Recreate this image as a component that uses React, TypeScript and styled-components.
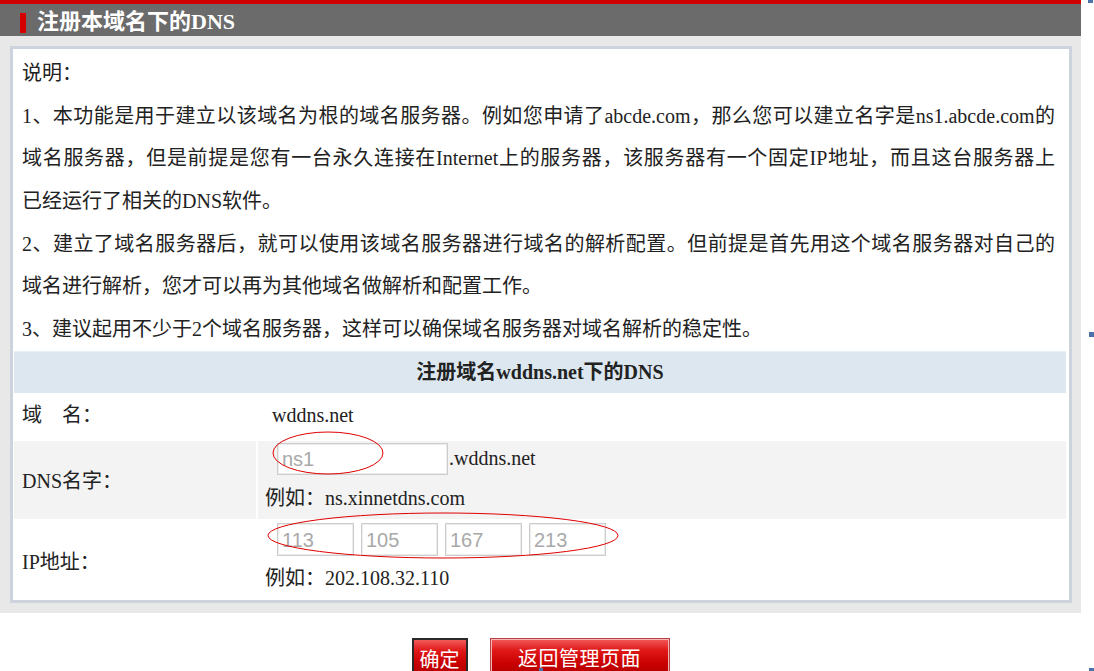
import styled, { createGlobalStyle } from "styled-components";

const GlobalStyle = createGlobalStyle`
  html, body {
    margin: 0;
    padding: 0;
    background: #fff;
  }
  body {
    font-family: "Liberation Serif", "Noto Sans CJK SC", serif;
    font-size: 20px;
    color: #222;
  }
`;

const Page = styled.div`
  position: relative;
  width: 1094px;
  height: 671px;
  overflow: hidden;
`;

const Frame = styled.div`
  width: 1081px;
`;

const Header = styled.div`
  height: 32px;
  border-top: 4px solid #d10000;
  background: #6b6b6b;
  display: flex;
  align-items: center;
  gap: 11px;
  padding-left: 20px;
`;

const HeaderMark = styled.span`
  width: 6px;
  height: 20px;
  margin-top: 6px;
  background: #d40000;
`;

const HeaderTitle = styled.h1`
  margin: 4px 0 0;
  font-size: 22px;
  line-height: 1;
  font-weight: bold;
  color: #fff;
`;

const Shell = styled.div`
  background: #e8e8e8;
  padding: 10px 9px 10px 10px;
`;

const Panel = styled.div`
  background: #fff;
  border: 3px solid #ccd3dc;
  padding: 3px 3px 0 1px;
`;

const Notes = styled.div`
  padding: 0 11px 0 8px;
  line-height: 42.67px;
`;

const Line = styled.span<{ $fill?: boolean }>`
  display: block;
  white-space: nowrap;
  text-align: ${(p) => (p.$fill ? "justify" : "left")};
  text-align-last: ${(p) => (p.$fill ? "justify" : "auto")};
`;

const Table = styled.div`
  display: flex;
  flex-direction: column;
`;

const Caption = styled.div`
  height: 42px;
  box-sizing: border-box;
  border-top: 1px solid #e8eff5;
  background: #dce7f0;
  display: flex;
  align-items: center;
  justify-content: center;
  padding-bottom: 3px;
  font-weight: bold;
`;

const Row = styled.div<{ $h: number; $gap?: number }>`
  display: grid;
  grid-template-columns: 242px 1fr;
  column-gap: 2px;
  height: ${(p) => p.$h}px;
  margin-top: ${(p) => p.$gap ?? 0}px;
`;

const Label = styled.div<{ $shade?: boolean; $raise?: number }>`
  background: ${(p) => (p.$shade ? "#f3f3f3" : "#fff")};
  display: flex;
  align-items: center;
  padding: 0 0 ${(p) => p.$raise ?? 0}px 8px;
`;

const Value = styled.div<{ $shade?: boolean; $center?: boolean }>`
  background: ${(p) => (p.$shade ? "#f3f3f3" : "#fff")};
  display: flex;
  flex-direction: column;
  justify-content: ${(p) => (p.$center ? "center" : "flex-start")};
  padding: ${(p) => (p.$center ? "0 0 2px 14px" : "2px 0 0 7px")};
`;

const Fields = styled.div`
  display: flex;
  align-items: center;
  gap: 7px;
  margin-left: 12px;
`;

const Field = styled.input<{ $w: number; $h: number }>`
  width: ${(p) => p.$w}px;
  height: ${(p) => p.$h}px;
  box-sizing: border-box;
  margin: 0;
  padding: 2px 4px 0;
  border: 1px solid #cdcdcd;
  box-shadow: inset 0 0 0 1px #ececec;
  background: #fff;
  font-family: "Liberation Sans", sans-serif;
  font-size: 20px;
  color: #a9a9a9;
  outline: none;
`;

const Suffix = styled.span`
  margin-left: -6px;
`;

const Example = styled.div<{ $gap: number }>`
  margin-top: ${(p) => p.$gap}px;
  line-height: 28px;
`;

const Actions = styled.div`
  display: flex;
  justify-content: center;
  gap: 22px;
  margin-top: 25px;
`;

const Button = styled.button<{ $w: number; $dark?: boolean }>`
  width: ${(p) => p.$w}px;
  height: 40px;
  box-sizing: border-box;
  padding: 9px 0 0;
  border: ${(p) => (p.$dark ? "2px solid #2a2a2a" : "1px solid #b84040")};
  box-shadow: ${(p) => (p.$dark ? "none" : "inset 0 0 0 1px #f2b4b4")};
  background: linear-gradient(#f25a5a 0%, #e01818 30%, #c80000 65%, #b00000 100%);
  color: #fff;
  font-family: "Noto Sans CJK SC", sans-serif;
  font-size: 20px;
  line-height: 1;
  display: flex;
  justify-content: center;
  align-items: flex-start;
  letter-spacing: ${(p) => (p.$dark ? "0" : "0.5px")};
  cursor: pointer;
`;

const Marks = styled.svg`
  position: absolute;
  left: 0;
  top: 0;
  pointer-events: none;
`;

export default function App() {
  return (
    <Page>
      <GlobalStyle />
      <Frame>
        <Header>
          <HeaderMark />
          <HeaderTitle>注册本域名下的DNS</HeaderTitle>
        </Header>
        <Shell>
          <Panel>
            <Notes>
              <Line>说明：</Line>
              <Line $fill>
                1、本功能是用于建立以该域名为根的域名服务器。例如您申请了abcde.com，那么您可以建立名字是ns1.abcde.com的
              </Line>
              <Line $fill>
                域名服务器，但是前提是您有一台永久连接在Internet上的服务器，该服务器有一个固定IP地址，而且这台服务器上
              </Line>
              <Line>已经运行了相关的DNS软件。</Line>
              <Line $fill>
                2、建立了域名服务器后，就可以使用该域名服务器进行域名的解析配置。但前提是首先用这个域名服务器对自己的
              </Line>
              <Line>域名进行解析，您才可以再为其他域名做解析和配置工作。</Line>
              <Line>3、建议起用不少于2个域名服务器，这样可以确保域名服务器对域名解析的稳定性。</Line>
            </Notes>
            <Table>
              <Caption>注册域名wddns.net下的DNS</Caption>
              <Row $h={48}>
                <Label $raise={7}>域　名：</Label>
                <Value $center>wddns.net</Value>
              </Row>
              <Row $h={78}>
                <Label $shade>DNS名字：</Label>
                <Value $shade>
                  <Fields>
                    <Field $w={171} $h={32} defaultValue="ns1" />
                    <Suffix>.wddns.net</Suffix>
                  </Fields>
                  <Example $gap={9}>例如：ns.xinnetdns.com</Example>
                </Value>
              </Row>
              <Row $h={79} $gap={2}>
                <Label>IP地址：</Label>
                <Value>
                  <Fields>
                    <Field $w={77} $h={33} defaultValue="113" />
                    <Field $w={77} $h={33} defaultValue="105" />
                    <Field $w={77} $h={33} defaultValue="167" />
                    <Field $w={77} $h={33} defaultValue="213" />
                  </Fields>
                  <Example $gap={8}>例如：202.108.32.110</Example>
                </Value>
              </Row>
            </Table>
          </Panel>
        </Shell>
        <Actions>
          <Button $w={56} $dark>
            确定
          </Button>
          <Button $w={180}>返回管理页面</Button>
        </Actions>
      </Frame>
      <Marks width="1094" height="671" viewBox="0 0 1094 671">
        <ellipse cx="328" cy="453" rx="55" ry="21" fill="none" stroke="#e00000" strokeWidth="1" />
        <ellipse cx="443" cy="535.5" rx="175" ry="22.5" fill="none" stroke="#e00000" strokeWidth="1" />
        <rect x="1088" y="0" width="5" height="3" fill="#4a72a8" />
        <rect x="1089" y="332" width="5" height="5" fill="#4a72a8" />
        <rect x="1089" y="668" width="5" height="3" fill="#4a72a8" />
        <rect x="539" y="668" width="4" height="3" fill="#4a72a8" />
      </Marks>
    </Page>
  );
}
